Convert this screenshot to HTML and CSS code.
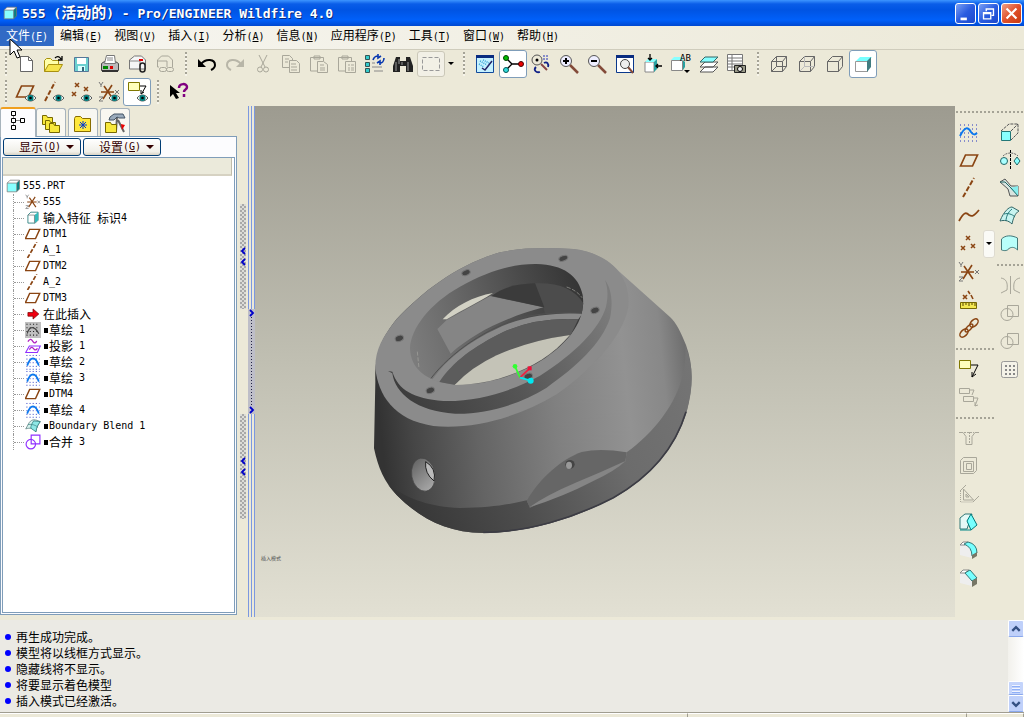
FILE: index.html
```html
<!DOCTYPE html>
<html lang="zh-CN">
<head>
    <meta charset="utf-8">
    <title>555 (活动的) - Pro/ENGINEER Wildfire 4.0</title>
    <meta name="viewport" content="width=device-width, initial-scale=1">
    <link rel="stylesheet" href="styles.css">
</head>
<body>
    <!-- shared icons -->
    <svg class="sprite" aria-hidden="true">
        <symbol id="eye" viewBox="0 0 11 8"><path d="M0 4c3-4 8-4 11 0-3 4-8 4-11 0z" fill="#e8f4f0" stroke="#555"/><circle cx="5.500" cy="4" r="3" fill="#008080"/><circle cx="5.500" cy="4" r="1.300" fill="#000"/></symbol>
        <symbol id="plane" viewBox="0 0 22 22"><path d="M2.500 17l5-11h12l-5 11z" fill="none" stroke="#8a4513" stroke-width="1.700"/></symbol>
        <symbol id="axis" viewBox="0 0 22 22"><path d="M5 20L16 1" fill="none" stroke="#8a4513" stroke-width="2" stroke-dasharray="5 2"/></symbol>
        <symbol id="points" viewBox="0 0 22 22"><path d="M8 3l4 4m0-4l-4 4M13 11l4 4m0-4l-4 4M3 13l4 4m0-4l-4 4" stroke="#8a4513" stroke-width="1.500"/></symbol>
        <symbol id="csys" viewBox="0 0 22 22"><path d="M3 11h13M6 5l9 13M14 4L5 18" stroke="#8a4513" stroke-width="1.600"/><path d="M1 1l2 3 2-3M3 4v2M17 9l4 4m0-4l-4 4M1 16h4l-4 4h4" fill="none" stroke="#777"/></symbol>
        <symbol id="sketch" viewBox="0 0 22 22"><path d="M2 2h18M2 7h18M2 12h18M2 17h18M2 21h18" stroke="#2030c0" stroke-width="1.300" stroke-dasharray="1.300 3"/><path d="M3 16c2-6 5-10 8-10s6 4 8 10" fill="none" stroke="#0a78ee" stroke-width="2.400"/></symbol>
        <symbol id="cube" viewBox="0 0 22 22"><path d="M3 7l4-4h13l-4 4z" fill="#fff"/><path d="M16 7l4-4v12l-4 4z" fill="#087f7f"/><path d="M3 7h13v12H3z" fill="#8ff"/><path d="M3 7l4-4h13v12l-4 4H3zh13v12M16 7l4-4" fill="none" stroke="#777"/></symbol>
        <symbol id="note" viewBox="0 0 22 22"><path d="M1.500 2.500h11v8h-11z" fill="#ffb" stroke="#807800"/><path d="M13 7h7l-6 12m0 0v-5m0 5l4-3" fill="none" stroke="#000"/></symbol>
        <symbol id="wire" viewBox="0 0 22 22"><path d="M3.500 8.500h11v10h-11zM3.500 8.500l5-5h10v10l-4 5M14.500 8.500l4-5" fill="none" stroke="#666"/></symbol>
        <symbol id="merge" viewBox="0 0 22 22"><circle cx="8" cy="12.500" r="6"/><path d="M8.500 3.500h11v11h-11z"/></symbol>
    </svg>

    <header class="titlebar">
        <svg class="title-icon" viewBox="0 0 22 22"><use href="#cube"/></svg>
        <h1><span class="latin">555 (</span>活动的<span class="latin">) - Pro/ENGINEER Wildfire 4.0</span></h1>
        <div class="window-buttons">
            <button aria-label="最小化"><svg viewBox="0 0 21 21"><path d="M5 15h7v3H5z" fill="#fff"/></svg></button>
            <button aria-label="还原"><svg viewBox="0 0 21 21"><path d="M5 9.500h8v7H5zM5 10.500h8M8 8V5.500h8v7h-2" fill="none" stroke="#fff" stroke-width="1.500"/></svg></button>
            <button class="close" aria-label="关闭"><svg viewBox="0 0 21 21"><path d="M5 5l11 11M16 5L5 16" stroke="#fff" stroke-width="2.400"/></svg></button>
        </div>
    </header>

    <nav class="menubar">
        <button class="active">文件<span class="latin">(<u>F</u>)</span></button>
        <button>编辑<span class="latin">(<u>E</u>)</span></button>
        <button>视图<span class="latin">(<u>V</u>)</span></button>
        <button>插入<span class="latin">(<u>I</u>)</span></button>
        <button>分析<span class="latin">(<u>A</u>)</span></button>
        <button>信息<span class="latin">(<u>N</u>)</span></button>
        <button>应用程序<span class="latin">(<u>P</u>)</span></button>
        <button>工具<span class="latin">(<u>T</u>)</span></button>
        <button>窗口<span class="latin">(<u>W</u>)</span></button>
        <button>帮助<span class="latin">(<u>H</u>)</span></button>
    </nav>
    <svg class="pointer" viewBox="0 0 13 22" aria-hidden="true"><path d="M1 1v16l4-4 3 7 3-1-3-7h5z" fill="#fff" stroke="#000"/></svg>

    <div class="toolbar">
        <span class="grip first"></span>
        <button aria-label="新建"><svg viewBox="0 0 22 22"><path d="M6.500 3.500h8l4 4v11h-12z" fill="#fff" stroke="#666"/><path d="M14.500 3.500v4h4" fill="none" stroke="#666"/></svg></button>
        <button aria-label="打开"><svg viewBox="0 0 22 22"><path d="M2.500 18.500v-11l2-2h4l2 2h6v4" fill="#ffffa8" stroke="#a89010"/><path d="M2.500 18.500l4-7h14l-4 7z" fill="#f6e44c" stroke="#a89010"/><path d="M13 5c2-2 4-2 6 1m1-3v4h-4" fill="none" stroke="#000" stroke-width="1.300"/></svg></button>
        <button aria-label="保存"><svg viewBox="0 0 22 22"><path d="M4.500 4.500h14v14h-14z" fill="#6cd0d0" stroke="#579"/><path d="M7 5h9v6H7z" fill="#fff"/><path d="M8 13h7v5H8z" fill="#dff"/><path d="M12 14h2v4h-2z" fill="#367"/></svg></button>
        <button aria-label="打印"><svg viewBox="0 0 22 22"><path d="M3.500 10.500l3-2h11l3 2v7h-17z" fill="#bbb" stroke="#444"/><path d="M6.500 10.500l2-8h8l1 8z" fill="#fff" stroke="#777"/><path d="M9 5h6M9 7h6" stroke="#888"/><path d="M5 13h5v3H5z" fill="#080"/><path d="M12 13h3v3h-3z" fill="#d00"/><path d="M4 17h16v2H4z" fill="#333"/></svg></button>
        <button aria-label="发送"><svg viewBox="0 0 22 22"><path d="M3.500 16V7l5-4h7l4 4v9z" fill="#f6f6f6" stroke="#777"/><path d="M4 8h10v8" fill="none" stroke="#888"/><path d="M13 6h4v2h-4z" fill="#d00"/><rect x="14" y="10" width="5" height="9" rx="2.500" fill="none" stroke="#222" stroke-width="1.500"/></svg></button>
        <button aria-label="发送链接" disabled><svg class="grey" viewBox="0 0 22 22"><path d="M5 14H3.500V7l4-4h7l4 4v7M4 8h9v6"/><rect x="5.500" y="14.500" width="7" height="4" rx="2"/><rect x="12.500" y="14.500" width="7" height="4" rx="2"/></svg></button>
        <span class="grip"></span>
        <button aria-label="撤消"><svg viewBox="0 0 22 22"><path d="M2 6v8h8z"/><path d="M5 11c5-6 14-5 14 1 0 3-2 4-4 5" fill="none" stroke="#000" stroke-width="2"/></svg></button>
        <button aria-label="重做" disabled><svg viewBox="0 0 22 22"><path d="M20 6v8h-8z" fill="#b8b6a8"/><path d="M17 11C12 5 3 6 3 12c0 3 2 4 4 5" fill="none" stroke="#b8b6a8" stroke-width="2"/></svg></button>
        <button aria-label="剪切" disabled><svg class="grey" viewBox="0 0 22 22"><path d="M7 2l6 12M15 2L9 14"/><circle cx="8" cy="16.500" r="2.500"/><circle cx="14" cy="16.500" r="2.500"/></svg></button>
        <button aria-label="复制" disabled><svg class="grey" viewBox="0 0 22 22"><path d="M9 14.500H2.500v-12h7l3 3v2M5 6h4M5 9h3M9.500 7.500h7l3 3v9h-10zM11 11h5M11 14h6M11 17h6"/></svg></button>
        <button aria-label="粘贴" disabled><svg class="grey" viewBox="0 0 22 22"><path d="M9 18H2.500V4.500h13V8M6 6V3h6v3zM9.500 8.500h6l4 3v8h-10zM12 12h4M12 15h5M12 17h5"/></svg></button>
        <button aria-label="选择性粘贴" disabled><svg class="grey" viewBox="0 0 22 22"><path d="M9 18H2.500V4.500h13V8M6 6V3h6v3zM9.500 8.500h10v11h-10zM12 12h2M15 12h3M12 15h2M15 15h3M12 17h2M15 17h3"/></svg></button>
        <button aria-label="再生"><svg viewBox="0 0 22 22"><path d="M1.500 2.500h4v4h-4zM1.500 9.500h4v4h-4zM1.500 15.500h4v4h-4z" fill="#3cc" stroke="#355"/><path d="M8 10h3M8 14h10M10 18h9" stroke="#888"/><path d="M9 7c1-3 3-4 5-4m0-2v4l3-2M20 5c0 3-2 5-4 5m0 2V8l-3 2" fill="none" stroke="#0838b0" stroke-width="1.600"/></svg></button>
        <button aria-label="查找"><svg viewBox="0 0 22 22"><path d="M4 4h4v4h6V4h4l3 9v6h-7v-6h-6v6H1v-6z" fill="#222"/><path d="M4 9v9M7 6v5M16 9v9M10 9v3" stroke="#999"/></svg></button>
        <button class="boxed" aria-label="选取"><svg viewBox="0 0 22 22"><path d="M2.500 4.500h17v13h-17z" fill="none" stroke="#999" stroke-dasharray="4 2"/></svg></button>
        <button class="drop" aria-label="选取选项"><svg viewBox="0 0 8 4"><path d="M1 0h6L4 3z"/></svg></button>
        <span class="grip"></span>
        <button aria-label="重画"><svg viewBox="0 0 22 22"><path d="M2.500 2.500h17v17h-17z" fill="#c5f1ff" stroke="#124a9c"/><path d="M2 2h18v3H2z" fill="#0a2c80"/><path d="M6 8l7 4M5 11l5 3M9 7l6 3" stroke="#38a4d4" stroke-width="1.500" stroke-dasharray="1 1"/><path d="M8 15l3 2 7-9" fill="none" stroke="#226" stroke-width="1.500"/></svg></button>
        <button class="pressed" aria-label="旋转中心"><svg viewBox="0 0 22 22"><path d="M4 5l6 6h9M10 11l-6 6" fill="none" stroke="#000" stroke-width="1.300"/><circle cx="4" cy="5" r="2.500" fill="#0b0" stroke="#040"/><circle cx="19" cy="11" r="2.500" fill="#e00" stroke="#400"/><circle cx="4" cy="17" r="2.500" fill="#3dd" stroke="#055"/></svg></button>
        <button aria-label="定向模式"><svg viewBox="0 0 22 22"><circle cx="7" cy="7" r="5" fill="none" stroke="#555"/><circle cx="7" cy="7" r="1.500"/><path d="M11 11l6 6" stroke="#844" stroke-width="2"/><path d="M13 3h6M13 6h6" stroke="#23b" stroke-dasharray="2 1"/><path d="M14 10c3-2 5 1 4 4M6 14c-3 3 0 6 4 5" fill="none" stroke="#128" stroke-width="1.800"/></svg></button>
        <button aria-label="放大"><svg viewBox="0 0 22 22"><path d="M12 12l8 8" stroke="#834a38" stroke-width="2.500"/><circle cx="8" cy="8" r="5.500" fill="#eef" stroke="#555"/><path d="M5 8h6M8 5v6" stroke="#000" stroke-width="2"/></svg></button>
        <button aria-label="缩小"><svg viewBox="0 0 22 22"><path d="M12 12l8 8" stroke="#834a38" stroke-width="2.500"/><circle cx="8" cy="8" r="5.500" fill="#eef" stroke="#555"/><path d="M5 8h6" stroke="#000" stroke-width="2"/></svg></button>
        <button aria-label="重新调整"><svg viewBox="0 0 22 22"><path d="M2.500 2.500h17v17h-17z" fill="#fff" stroke="#0a388c"/><path d="M2 2h18v3H2z" fill="#0a2c80"/><path d="M14 14l5 6" stroke="#834a38" stroke-width="2"/><circle cx="11" cy="11" r="4.500" fill="#eee" stroke="#444"/></svg></button>
        <button aria-label="重定向"><svg viewBox="0 0 22 22"><path d="M3 9h9v10H3z" fill="#fff" stroke="#888"/><path d="M3 9l3-3h9l-3 3z" fill="#8ff"/><path d="M12 9l3-3v10l-3 3z" fill="#29a0a0"/><path d="M8 1v6m-2-2l2 2 2-2M20 13h-6m2-2l-2 2 2 2" fill="none" stroke="#000" stroke-width="1.300"/></svg></button>
        <button aria-label="已命名视图"><svg viewBox="0 0 22 22"><path d="M1.500 7.500h11v10h-11z" fill="#fff" stroke="#888"/><path d="M1 7l3-3h8l1 3z" fill="#8ff"/><path d="M13 7l2 2v5l-2 3z" fill="#29a0a0"/><text x="10" y="8" class="tiny-label">AB</text><path d="M14 17h6l-3 3z"/></svg></button>
        <button aria-label="层"><svg viewBox="0 0 22 22"><path d="M2 19l5-5h13l-5 5zM2 14l5-5h13l-5 5z" fill="#fff" stroke="#555"/><path d="M2 9l5-5h13l-5 5z" fill="#8ff" stroke="#366"/></svg></button>
        <button aria-label="视图管理器"><svg viewBox="0 0 22 22"><path d="M1.500 1.500h15v16h-15zM6 2v15M2 5h14M2 8h14M2 11h14M2 14h14" fill="#fff" stroke="#777"/><path d="M8.500 12.500h11v7h-11z" fill="#998" stroke="#222"/><circle cx="14" cy="16" r="2.500" fill="#eee" stroke="#000"/></svg></button>
        <span class="grip"></span>
        <button aria-label="线框"><svg viewBox="0 0 22 22"><use href="#wire"/><path d="M3.500 18.500l5-5h10M8.500 3.500v10" fill="none" stroke="#666"/></svg></button>
        <button aria-label="隐藏线"><svg viewBox="0 0 22 22"><use href="#wire"/><path d="M3.500 18.500l5-5h10M8.500 3.500v10" fill="none" stroke="#bbb"/></svg></button>
        <button aria-label="消隐"><svg viewBox="0 0 22 22"><use href="#wire"/></svg></button>
        <button class="pressed" aria-label="着色"><svg viewBox="0 0 22 22"><path d="M3.500 8.500h12v10h-12z" fill="#fff" stroke="#999"/><path d="M4 8l4-4h12l-4 4z" fill="#7ff"/><path d="M15 8l4-4v10l-4 5z" fill="#407c80"/></svg></button>
    </div>

    <div class="toolbar">
        <span class="grip first"></span>
        <button aria-label="基准平面"><svg viewBox="0 0 22 22"><use href="#plane" y="-1"/><use href="#eye" x="11" y="13" width="11" height="8"/></svg></button>
        <button aria-label="基准轴"><svg viewBox="0 0 22 22"><path d="M3 20L13 1" stroke="#8a4513" stroke-width="2" stroke-dasharray="5 2"/><use href="#eye" x="11" y="13" width="11" height="8"/></svg></button>
        <button aria-label="基准点"><svg viewBox="0 0 22 22"><path d="M5 2l4 4m0-4L5 6M14 6l4 4m0-4l-4 4M2 11l4 4m0-4l-4 4" stroke="#8a4513" stroke-width="1.500"/><use href="#eye" x="11" y="13" width="11" height="8"/></svg></button>
        <button aria-label="坐标系"><svg viewBox="0 0 22 22"><use href="#csys"/><use href="#eye" x="11" y="13" width="11" height="8"/></svg></button>
        <button class="pressed" aria-label="注释"><svg viewBox="0 0 22 22"><path d="M2.500 1.500h11v8h-11z" fill="#ffb" stroke="#807800"/><path d="M14 5h6l-4 7m-1-3v4l3-2" fill="none" stroke="#000"/><use href="#eye" x="11" y="13" width="11" height="8"/></svg></button>
        <span class="grip"></span>
        <button aria-label="上下文帮助"><svg viewBox="0 0 22 22"><path d="M2 4v12l3-3 3 5 3-1-3-5h4z"/><path d="M11 7c0-5 8-5 8-1 0 3-3 2-3 5M16 13v3" fill="none" stroke="#800080" stroke-width="2.500"/></svg></button>
    </div>

    <main class="workspace">
        <aside class="navigator">
            <div class="tabs">
                <button class="current" aria-label="模型树"><svg viewBox="0 0 22 22"><path d="M4.500 1.500h4v4h-4zM4.500 8.500h4v4h-4zM4.500 15.500h4v4h-4zM13.500 8.500h4v4h-4z" fill="#fff" stroke="#000"/><path d="M6.500 6v2M6.500 13v2M9 10.500h4" stroke="#888"/></svg></button>
                <button aria-label="文件夹浏览器"><svg viewBox="0 0 22 22"><g fill="#f8e83c" stroke="#776800"><path d="M2.500 3.500h4l1 2h5v7h-10z"/><path d="M5.500 8.500h4l1 2h5v7h-10z"/><path d="M9.500 11.500h4l1 2h5v7h-10z"/></g></svg></button>
                <button aria-label="收藏夹"><svg viewBox="0 0 22 22"><path d="M2.500 19.500v-13l1-2h5l2 2h8v13z" fill="#ffe83c" stroke="#886d00"/><path d="M11 9v8M7 13h8M8 10l6 6M14 10l-6 6" stroke="#023bd0"/></svg></button>
                <button aria-label="连接"><svg viewBox="0 0 22 22"><path d="M13 5l-1 14M14 8l6 12" stroke="#666" stroke-width="2"/><path d="M1.500 10.500h5l1 2h5v8h-11z" fill="#f8e83c" stroke="#776800"/><path d="M6 5l4-3h9l2 4h-6l-2-1-3 3H5z" fill="#9ab" stroke="#456"/><path d="M17 12l4 1-3 5zM20 19l-6-9" fill="#e00"/></svg></button>
            </div>
            <div class="panel">
                <div class="panel-menu">
                    <button>显示<span class="latin">(<u>O</u>)</span><i class="arrow"></i></button>
                    <button>设置<span class="latin">(<u>G</u>)</span><i class="arrow"></i></button>
                </div>
                <div class="tree-box">
                    <div class="tree-head"></div>
                    <div class="root"><svg viewBox="0 0 22 22"><use href="#cube"/></svg><span class="latin">555.PRT</span></div>
                    <ul class="tree">
                        <li><svg viewBox="0 0 22 22"><use href="#csys"/></svg><span class="latin">555</span></li>
                        <li><svg viewBox="0 0 22 22"><path d="M4 7l4-4h10v11l-4 4H4z" fill="#fff" stroke="#066"/><path d="M13 7l5-4v11l-5 4z" fill="#3bb"/><path d="M4 7h9v11" fill="none" stroke="#777"/></svg>输入特征<span class="latin"> </span>标识<span class="latin">4</span></li>
                        <li><svg viewBox="2 2 19 19"><use href="#plane" width="22" height="22"/></svg><span class="latin">DTM1</span></li>
                        <li><svg viewBox="2 1 19 19"><use href="#axis" width="22" height="22"/></svg><span class="latin">A_1</span></li>
                        <li><svg viewBox="2 2 19 19"><use href="#plane" width="22" height="22"/></svg><span class="latin">DTM2</span></li>
                        <li><svg viewBox="2 1 19 19"><use href="#axis" width="22" height="22"/></svg><span class="latin">A_2</span></li>
                        <li><svg viewBox="2 2 19 19"><use href="#plane" width="22" height="22"/></svg><span class="latin">DTM3</span></li>
                        <li><svg viewBox="0 0 22 22"><path d="M4 9h7V4l8 7-8 7v-4H4z" fill="#f00010" stroke="#700"/></svg>在此插入</li>
                        <li class="supp"><svg class="hidden-item" viewBox="0 0 22 22"><path d="M2 3h18M2 8h18M2 13h18M2 18h18" stroke="#222" stroke-width="1.500" stroke-dasharray="1.500 3"/><path d="M3 16c3-11 10-11 16 0" fill="none" stroke="#444" stroke-width="1.500"/></svg>草绘<span class="latin"> 1</span></li>
                        <li class="supp"><svg viewBox="0 0 22 22"><path d="M4 5c3-5 5-3 7 0s4 2 5-1M6 16c3-6 5-2 7 0 2 1 3 0 4-2" fill="none" stroke="#b020c0" stroke-width="1.800"/><path d="M1 20l5-9h15l-4 9z" fill="none" stroke="#9030ff" stroke-width="1.500"/></svg>投影<span class="latin"> 1</span></li>
                        <li class="supp"><svg viewBox="0 0 22 22"><use href="#sketch"/></svg>草绘<span class="latin"> 2</span></li>
                        <li class="supp"><svg viewBox="0 0 22 22"><use href="#sketch"/></svg>草绘<span class="latin"> 3</span></li>
                        <li class="supp"><svg viewBox="2 2 19 19"><use href="#plane" width="22" height="22"/></svg><span class="latin">DTM4</span></li>
                        <li class="supp"><svg viewBox="0 0 22 22"><use href="#sketch"/></svg>草绘<span class="latin"> 4</span></li>
                        <li class="supp"><svg viewBox="0 0 22 22"><path d="M1 15l5-9c4-5 8-4 15-1-3 4-5 7-6 14-4-5-8-6-14-4z" fill="#d5f3ef" stroke="#577"/><path d="M12 4c-3 4-4 7-4 10l7 5c1-7 3-10 6-14z" fill="#8ee8e6" stroke="#277"/><path d="M4 9c6-1 11 1 14 4" fill="none" stroke="#488"/></svg><span class="latin">Boundary Blend 1</span></li>
                        <li class="supp"><svg viewBox="0 0 22 22"><g fill="none" stroke="#9030ff" stroke-width="1.600"><circle cx="8" cy="14" r="6.500"/><path d="M8.500 1.500h12v12h-12z"/></g></svg>合并<span class="latin"> 3</span></li>
                    </ul>
                </div>
            </div>
        </aside>

        <div class="sash left-sash">
            <button class="handle" aria-label="收起导航器"><svg viewBox="0 0 6 20"><path d="M5 1L2 4l3 3M5 12l-3 3 3 3" fill="none" stroke="#0000c8" stroke-width="1.800"/></svg></button>
            <button class="handle" aria-label="收起导航器"><svg viewBox="0 0 6 20"><path d="M5 1L2 4l3 3M5 12l-3 3 3 3" fill="none" stroke="#0000c8" stroke-width="1.800"/></svg></button>
        </div>
        <div class="sash browser-sash">
            <button class="handle wide" aria-label="展开浏览器">
                <svg viewBox="0 0 6 8"><path d="M1 1l3 3-3 3" fill="none" stroke="#0000c8" stroke-width="1.800"/></svg>
                <span class="dots"></span>
                <svg viewBox="0 0 6 8"><path d="M1 1l3 3-3 3" fill="none" stroke="#0000c8" stroke-width="1.800"/></svg>
            </button>
        </div>

        <section class="viewport">
            <svg class="model" viewBox="0 0 1050 930" role="img" aria-label="555.PRT">
                <defs>
                    <linearGradient id="body" x1="43" y1="400" x2="995" y2="300" gradientUnits="userSpaceOnUse">
                        <stop offset="0" stop-color="#333"/><stop offset=".1" stop-color="#464646"/><stop offset=".3" stop-color="#646464"/><stop offset=".55" stop-color="#808080"/><stop offset=".78" stop-color="#929292"/><stop offset=".9" stop-color="#888"/><stop offset="1" stop-color="#666"/>
                    </linearGradient>
                    <linearGradient id="rim" x1="80" y1="800" x2="995" y2="400" gradientUnits="userSpaceOnUse">
                        <stop offset="0" stop-color="#333"/><stop offset=".35" stop-color="#4c4c4c"/><stop offset=".7" stop-color="#6c6c6c"/><stop offset="1" stop-color="#747474"/>
                    </linearGradient>
                    <linearGradient id="step" x1="92" y1="500" x2="750" y2="200" gradientUnits="userSpaceOnUse">
                        <stop offset="0" stop-color="#3a3a3a"/><stop offset=".5" stop-color="#555"/><stop offset="1" stop-color="#7c7c7c"/>
                    </linearGradient>
                    <linearGradient id="bore" x1="150" y1="330" x2="675" y2="180" gradientUnits="userSpaceOnUse">
                        <stop offset="0" stop-color="#7c7c7c"/><stop offset=".3" stop-color="#686868"/><stop offset=".7" stop-color="#494949"/><stop offset="1" stop-color="#343434"/>
                    </linearGradient>
                    <linearGradient id="drill" x1="160" y1="680" x2="215" y2="765" gradientUnits="userSpaceOnUse">
                        <stop offset="0" stop-color="#666"/><stop offset="1" stop-color="#aaa"/>
                    </linearGradient>
                </defs>
                <path fill="url(#body)" d="M46 440L42 640C55 700 72 740 110 780C180 850 260 893 370 894C500 894 640 852 760 790C880 722 950 630 980 530C1000 450 1000 390 978 330C962 290 948 262 930 246L780 112C740 70 690 45 640 42C560 37 480 38 420 52C290 90 190 168 110 252C66 308 44 350 46 440z"/>
                <path fill="url(#rim)" d="M85 750C150 795 210 815 300 819C390 819 450 808 500 796L510 818L796 680L800 652C880 595 950 505 968 420Q980 370 975 330C1000 390 1002 450 980 530C950 630 880 722 760 790C640 852 500 894 370 894C260 893 180 850 110 780z"/>
                <path fill="none" stroke="#3c3c44" stroke-width="5" d="M370 892C500 892 640 850 760 788C880 720 948 630 978 530"/>
                <path fill="#8b8b8b" d="M46 400C55 480 100 555 220 573C340 585 480 545 590 478C700 400 780 310 802 230C818 155 780 60 640 42C560 37 480 38 420 52C290 90 190 168 110 252C66 308 45 345 46 400z"/>
                <path fill="url(#step)" d="M84 408L97 410C115 465 160 490 250 498C360 500 455 468 540 422C645 355 720 280 738 215C746 178 742 155 735 135C754 160 760 200 750 250C725 325 650 395 560 458C480 508 380 538 285 536C170 530 105 475 97 415z"/>
                <path fill="url(#bore)" d="M150 340C152 280 210 205 300 155C380 110 455 86 530 87C610 90 655 120 668 180C680 260 620 325 555 370C470 425 370 452 285 449C195 440 152 400 150 340z"/>
                <path fill="#4c4c4c" d="M525 145Q630 140 670 205L665 237H555L550 215z"/>
                <path fill="#858585" d="M232 282L260 255L390 183L550 217C430 250 340 295 272 356z"/>
                <path fill="#3b3b3b" d="M395 183C430 155 470 147 525 145L553 217z"/>
                <path fill="#d2d1c4" d="M248 253C285 212 340 185 399 174C350 205 315 220 260 253z"/>
                <path fill="#8a8a8a" d="M215 436C260 370 330 318 410 281Q510 231 668 235L655 253Q530 246 430 291C340 335 280 380 238 441z"/>
                <path fill="none" stroke="#505050" stroke-width="3" d="M213 430C270 355 380 275 500 244Q590 228 666 235"/>
                <path fill="#5c5c5c" d="M238 441C280 380 340 335 430 291Q530 246 655 253L632 300Q510 316 410 361Q335 396 285 449z"/>
                <path fill="#c4c3b7" d="M284 450Q335 396 410 361Q510 316 630 300C570 370 490 413 390 438Q330 450 284 450z"/>
                <path fill="none" stroke="#a5a59e" stroke-width="2" stroke-dasharray="12 5" d="M620 156Q650 166 666 188M172 350l5 50"/>
                <g fill="#444" stroke="#777" stroke-width="3">
                    <ellipse cx="318" cy="113" rx="13" ry="8" transform="rotate(-20 318 113)"/>
                    <ellipse cx="610" cy="70" rx="14" ry="8" transform="rotate(-20 610 70)"/>
                    <ellipse cx="705" cy="226" rx="13" ry="9" transform="rotate(-20 705 226)"/>
                    <ellipse cx="118" cy="310" rx="13" ry="9" transform="rotate(-20 118 310)"/>
                    <ellipse cx="211" cy="466" rx="13" ry="9" transform="rotate(-20 211 466)"/>
                    <ellipse cx="505" cy="424" rx="13" ry="9" transform="rotate(-20 505 424)"/>
                </g>
                <path fill="#666" d="M500 797C540 730 600 675 665 651Q720 638 800 652L796 680L510 818z"/>
                <path fill="#858585" d="M508 817Q560 780 650 742Q720 713 796 678Q770 705 700 738Q610 785 508 817z"/>
                <ellipse cx="190" cy="719" rx="35" ry="50" fill="url(#drill)" stroke="#444" stroke-width="2" transform="rotate(-10 190 719)"/>
                <path fill="#bbb" stroke="#222" stroke-width="3" d="M197 680Q193 715 222 738Q230 700 197 680z"/>
                <ellipse cx="630" cy="688" rx="14" ry="13" fill="#444"/><ellipse cx="627" cy="691" rx="9" ry="11" fill="#999"/>
                <g fill="none" stroke-width="5"><path stroke="#30ff30" d="M480 428L465 394"/><path stroke="#f02040" d="M480 428L509 400"/><path stroke="#00e8f0" d="M480 428L512 437"/></g>
                <circle cx="465" cy="394" r="7" fill="#30ff30"/><path d="M503 394h12v12h-12z" fill="#f01038"/><circle cx="512" cy="437" r="9" fill="#00e8f0"/>
            </svg>
            <p class="canvas-note">插入模式</p>
        </section>

        <aside class="features">
            <div class="feature-col">
                <span class="rule"></span>
                <button aria-label="草绘"><svg viewBox="0 0 22 22"><path d="M2 4h18M2 8h18M2 12h18M2 16h18M2 20h18" stroke="#2030c0" stroke-dasharray="1 3"/><path d="M2 15c5-10 8-9 11-4 2 3 4 3 6 1" fill="none" stroke="#0a78ee" stroke-width="2"/></svg></button>
                <button aria-label="平面"><svg viewBox="0 0 22 22"><use href="#plane"/></svg></button>
                <button aria-label="轴"><svg viewBox="0 0 22 22"><use href="#axis"/></svg></button>
                <button aria-label="曲线"><svg viewBox="0 0 22 22"><path d="M1 16c5-9 7-9 10-6 3 2 5 1 10-5" fill="none" stroke="#8a4513" stroke-width="1.800"/></svg></button>
                <div class="with-fly">
                    <button aria-label="点"><svg viewBox="0 0 22 22"><use href="#points"/></svg></button>
                    <button class="fly" aria-label="点选项"><svg viewBox="0 0 8 4"><path d="M1 0h6L4 3z"/></svg></button>
                </div>
                <button aria-label="坐标系"><svg viewBox="0 0 22 22"><use href="#csys"/></svg></button>
                <button aria-label="分析"><svg viewBox="0 0 22 22"><path d="M5 6l4 4m0-4l-4 4M10 2l2 3M13 6l2 4" stroke="#8a4513" stroke-width="1.600"/><path d="M2.500 13.500h16v6h-16z" fill="#f4e850" stroke="#776800"/><path d="M5 14v3M8 14v2M11 14v3M14 14v2M17 14v3" stroke="#554400"/></svg></button>
                <button aria-label="参照"><svg viewBox="0 0 22 22"><g fill="none" stroke="#8a4513" stroke-width="1.500"><ellipse cx="6" cy="16" rx="5" ry="3" transform="rotate(-45 6 16)"/><ellipse cx="11" cy="11" rx="5" ry="2" transform="rotate(-45 11 11)"/><ellipse cx="16" cy="6" rx="5" ry="3" transform="rotate(-45 16 6)"/></g></svg></button>
                <span class="rule"></span>
                <button aria-label="注释"><svg viewBox="0 0 22 22"><use href="#note"/></svg></button>
                <button aria-label="注释传播" disabled><svg class="grey" viewBox="0 0 22 22"><path d="M1.500 2.500h10v5h-10zM5.500 10.500h10v5h-10zM12 4h4l-2 5M16 12h4l-3 8m0-4v4l3-1"/></svg></button>
                <span class="rule"></span>
                <button aria-label="孔" disabled><svg class="grey" viewBox="0 0 22 22"><path d="M1 5.500h4l3 4v8h6v-8l3-4h4"/><path d="M6 5.500h10M11.500 5v13" stroke-dasharray="2 1"/></svg></button>
                <button aria-label="壳" disabled><svg class="grey" viewBox="0 0 22 22"><path d="M2.500 5.500l3-3h13v13l-3 3h-13zM5.500 6.500h10v10h-10zM8.500 8.500h5v6h-5z"/></svg></button>
                <button aria-label="筋" disabled><svg class="grey" viewBox="0 0 22 22"><path d="M2 8l6-6M5.500 6v11h10zM8 11v3h3zM15 19l6-6"/><path d="M2.500 8v11H15" stroke-dasharray="1 1"/></svg></button>
                <button aria-label="拔模"><svg viewBox="0 0 22 22"><path d="M2 7l5-4h7L9 18H2z" fill="#e6f8f6" stroke="#377"/><path d="M9 10l4-7 6 11-6 5z" fill="#7ff" stroke="#077"/><path d="M2 19h11" stroke="#088"/></svg></button>
                <button aria-label="倒圆角"><svg viewBox="0 0 22 22"><path d="M2 6h5q7 2 7 13L2 16z" fill="#eee"/><path d="M2 6l3-3h5l-3 3z" fill="#fff" stroke="#888"/><path d="M6 5l4-2q9 2 9 11l-5 3Q14 8 6 5z" fill="#7ff" stroke="#377"/><path d="M14 16l5-3v4l-5 3z" fill="#776"/></svg></button>
                <button aria-label="倒角"><svg viewBox="0 0 22 22"><path d="M2 6h5l7 7v6L2 16z" fill="#eee"/><path d="M2 6l3-3h6l-4 3z" fill="#fff" stroke="#888"/><path d="M7 6l5-3 7 8-5 3z" fill="#7ff" stroke="#377"/><path d="M14 14l5-3v6l-5 3z" fill="#776"/></svg></button>
            </div>
            <div class="feature-col">
                <span class="rule"></span>
                <button aria-label="拉伸"><svg viewBox="0 0 22 22"><path d="M2.500 10.500h9v9h-9z" fill="#8ff" stroke="#277"/><path d="M2 10l8-7h9v9l-7 7M12 10l7-7" fill="none" stroke="#555" stroke-dasharray="3 1"/></svg></button>
                <button aria-label="旋转"><svg viewBox="0 0 22 22"><path d="M11.500 1v20" stroke="#000" stroke-dasharray="3 1"/><circle cx="5" cy="12" r="3.500" fill="#aff" stroke="#266"/><path d="M15 12l3-4 3 4-3 4z" fill="#8ff" stroke="#266"/><path d="M4 7c4-4 11-4 15 0" fill="none" stroke="#666" stroke-dasharray="2 1"/></svg></button>
                <button aria-label="可变剖面扫描"><svg viewBox="0 0 22 22"><path d="M1 5l5-3 6 7h7v10h-8l-2-7z" fill="#d8e4df" stroke="#555"/><path d="M11 11l8-2v10z" fill="#8ee"/><path d="M1 5h5l6 6 7 8" fill="none" stroke="#266"/></svg></button>
                <button aria-label="边界混合"><svg viewBox="0 0 22 22"><path d="M1 16C5 6 10 2 13 2l7 4c-4 2-6 8-7 13-4-4-8-4-12-3z" fill="#c8f4f0" stroke="#366"/><path d="M5 9c4-1 8 0 11 3M13 4c-4 3-6 8-6 12" fill="none" stroke="#277"/></svg></button>
                <button aria-label="填充"><svg viewBox="0 0 22 22"><path d="M2.500 17V6c4-4 10-4 16-1v12c-3-3-5-3-8-2-2 3-5 3-8 2z" fill="#b8fffa" stroke="#477"/></svg></button>
                <span class="rule"></span>
                <button aria-label="镜像" disabled><svg class="grey" viewBox="0 0 22 22"><path d="M11.500 2v18M2 4c5 1 7 4 6 12l-6 3M21 4c-5 1-7 4-6 12l6 3"/></svg></button>
                <button aria-label="合并" disabled><svg class="grey" viewBox="0 0 22 22"><use href="#merge"/></svg></button>
                <button aria-label="修剪" disabled><svg class="grey" viewBox="0 0 22 22"><use href="#merge"/></svg></button>
                <button aria-label="阵列" disabled><svg viewBox="0 0 22 22"><rect x="2.500" y="3.500" width="16" height="16" rx="2" fill="#f4f2e8" stroke="#999"/><path d="M6 8h11M6 12h11M6 16h11" stroke="#888" stroke-width="2" stroke-dasharray="2 2"/></svg></button>
            </div>
        </aside>
    </main>

    <section class="messages">
        <ul>
            <li>再生成功完成。</li>
            <li>模型将以线框方式显示。</li>
            <li>隐藏线将不显示。</li>
            <li>将要显示着色模型</li>
            <li>插入模式已经激活。</li>
        </ul>
        <div class="scrollbar">
            <button aria-label="向上滚动"><svg viewBox="0 0 15 15"><path d="M3.500 9.500l4-4 4 4" fill="none" stroke="#345083" stroke-width="2.500"/></svg></button>
            <span class="track"></span>
            <button class="thumb" aria-label="滚动块"></button>
            <button aria-label="向下滚动"><svg viewBox="0 0 15 15"><path d="M3.500 5.500l4 4 4-4" fill="none" stroke="#345083" stroke-width="2.500"/></svg></button>
        </div>
    </section>
    <footer class="statusbar"><span></span><span></span><span></span></footer>
</body>
</html>
```

FILE: styles.css
```css
* {
    box-sizing: border-box;
}
body {
    margin: 0;
    height: 100vh;
    display: flex;
    flex-direction: column;
    overflow: hidden;
    background: #ece9d8;
    color: #000;
    font: 12px/16px "Noto Sans CJK SC", sans-serif;
    position: relative;
}
button {
    margin: 0;
    padding: 0;
    border: 0;
    background: none;
    font: inherit;
    color: inherit;
}
svg {
    display: block;
    flex: none;
}
.sprite {
    position: absolute;
    width: 0;
    height: 0;
}
.latin {
    font-family: "DejaVu Sans Mono", "Noto Sans CJK SC", monospace;
    font-size: 10px;
    white-space: pre;
}
.grey {
    fill: none;
    stroke: #a9a79a;
}
.tiny-label {
    font: 9px "DejaVu Sans Mono", monospace;
}

/* title bar */
.titlebar {
    height: 26px;
    flex: none;
    display: flex;
    align-items: center;
    padding: 0 2px 0 2px;
    background: linear-gradient(#3d95ff 0, #0a5de8 4px, #0054e3 10px, #0060fa 20px, #0048d0 26px);
}
.title-icon {
    width: 16px;
    height: 16px;
    margin-right: 4px;
}
.titlebar h1 {
    flex: 1;
    margin: 0;
    color: #fff;
    font-size: 15px;
    line-height: 24px;
    font-weight: bold;
    text-shadow: 1px 1px 0 #0a2c80;
    white-space: nowrap;
}
.titlebar .latin {
    font-size: 13px;
}
.window-buttons {
    display: flex;
    gap: 2px;
}
.window-buttons button {
    width: 21px;
    height: 21px;
    border: 1px solid #fff;
    border-radius: 3px;
    background: linear-gradient(135deg, #7ba0f4, #2a5ce0 50%, #1c48cc);
}
.window-buttons svg {
    width: 19px;
    height: 19px;
}
.window-buttons .close {
    background: linear-gradient(135deg, #f0a088, #e0512c 50%, #c83a10);
}

/* menu bar */
.menubar {
    height: 24px;
    flex: none;
    display: flex;
    align-items: flex-start;
    background: linear-gradient(90deg, #f7f6f1, #ece9d8);
    border-bottom: 1px solid #cfccbc;
}
.menubar button {
    height: 20px;
    padding: 0 6px 2px;
    line-height: 18px;
    white-space: nowrap;
}
.menubar .active {
    background: #316ac5;
    color: #fff;
}
.pointer {
    position: absolute;
    left: 9px;
    top: 38px;
    width: 13px;
    height: 22px;
    z-index: 2;
}

/* toolbars */
.toolbar {
    height: 28px;
    flex: none;
    display: flex;
    align-items: center;
}
.toolbar button,
.feature-col button {
    width: 28px;
    height: 28px;
    flex: none;
    display: flex;
    align-items: center;
    justify-content: center;
    border-radius: 3px;
}
.toolbar svg,
.feature-col svg {
    width: 22px;
    height: 22px;
}
.toolbar .drop {
    width: 12px;
}
.toolbar .drop svg,
.feature-col .fly svg {
    width: 8px;
    height: 4px;
}
.toolbar .pressed {
    background: #fff;
    border: 1px solid #7f9db9;
}
.toolbar .boxed {
    height: 26px;
    background: #f2f0e6;
    border: 1px solid #cbc8b8;
}
.grip {
    width: 14px;
    height: 24px;
    flex: none;
    background: repeating-linear-gradient(#a5a396 0 2px, #f6f4ea 2px 4px) center / 2px 100% no-repeat;
}
.grip.first {
    width: 11px;
}

/* workspace */
.workspace {
    flex: 1;
    min-height: 0;
    display: flex;
}
.navigator {
    width: 237px;
    flex: none;
    display: flex;
    flex-direction: column;
    padding: 1px 0 2px;
}
.tabs {
    height: 29px;
    flex: none;
    display: flex;
    align-items: flex-end;
    gap: 2px;
}
.tabs button {
    width: 30px;
    height: 28px;
    display: flex;
    align-items: center;
    justify-content: center;
    border: 1px solid #a7b3bc;
    border-bottom: 0;
    border-radius: 3px 3px 0 0;
    background: #f8f7f1;
}
.tabs .current {
    width: 36px;
    height: 30px;
    margin-bottom: -1px;
    margin-right: -2px;
    padding-bottom: 4px;
    border-top: 2px solid #f0a020;
    background: #fcfcfe;
    z-index: 1;
}
.tabs svg {
    width: 22px;
    height: 22px;
}
.panel {
    flex: 1;
    min-height: 0;
    display: flex;
    flex-direction: column;
    padding: 1px;
    border: 1px solid #7f9db9;
    background: #fcfcfe;
}
.panel-menu {
    display: flex;
    gap: 2px;
    padding: 0 1px 1px;
}
.panel-menu button {
    width: 78px;
    height: 18px;
    display: flex;
    align-items: center;
    justify-content: flex-end;
    padding-right: 6px;
    border: 1px solid #003c74;
    border-radius: 3px;
    background: linear-gradient(#fff, #f0efe8 80%, #d8d2c4);
    color: #300;
}
.arrow {
    margin-left: 5px;
    border: 4px solid transparent;
    border-top-color: #300;
    border-bottom: 0;
}
.tree-box {
    flex: 1;
    min-height: 0;
    border: 1px solid #7f9db9;
    background: #fff;
}
.tree-head {
    height: 18px;
    margin-right: 2px;
    border-right: 1px solid #c0bcab;
    border-bottom: 2px solid #d6d2c2;
    background: #ebeadb;
}
.root {
    display: flex;
    align-items: center;
    gap: 2px;
    height: 16px;
    margin-top: 2px;
    padding-left: 2px;
}
.root svg,
.tree svg {
    width: 16px;
    height: 16px;
}
.tree {
    margin: 0 0 0 10px;
    padding: 0;
    list-style: none;
}
.tree li {
    display: flex;
    align-items: center;
    height: 16px;
    white-space: nowrap;
    border-left: 1px dotted #999;
}
.tree li:before {
    content: "";
    width: 10px;
    margin-right: 1px;
    border-top: 1px dotted #999;
}
.tree li svg {
    margin-right: 2px;
}
/* square mark in front of the name */
.tree .supp svg {
    box-sizing: content-box;
    margin-right: 0;
    padding-right: 8px;
    background: linear-gradient(#000, #000) 19px 6px / 4px 5px no-repeat;
}
.tree .hidden-item {
    background: linear-gradient(#000, #000) 19px 6px / 4px 5px no-repeat, linear-gradient(#c0c0c0, #c0c0c0) 0 0 / 16px 16px no-repeat;
}
.tree .supp .hidden-item {
    background: linear-gradient(#000, #000) 19px 6px / 4px 5px no-repeat, linear-gradient(#c0c0c0, #c0c0c0) 0 0 / 16px 16px no-repeat;
}

/* sashes between the panes */
.sash {
    flex: none;
    display: flex;
    flex-direction: column;
    justify-content: center;
}
.left-sash {
    width: 11px;
    align-items: center;
    gap: 105px;
}
.handle {
    width: 6px;
    height: 105px;
    display: flex;
    align-items: center;
    justify-content: center;
    background: repeating-conic-gradient(#a8a8a8 0 25%, #dcdcd8 0 50%) 0 0 / 4px 4px;
}
.handle svg {
    width: 6px;
    height: 20px;
}
.browser-sash {
    width: 7px;
    background: linear-gradient(90deg, #7c98e0 1px, #ece9d8 1px 3px, #7c98e0 3px 4px, #ece9d8 4px 6px, #7c98e0 6px);
}
.handle.wide {
    width: 7px;
    flex-direction: column;
    justify-content: space-between;
    background: #bebec8;
}
.wide svg {
    height: 8px;
}
.dots {
    flex: 1;
    width: 1px;
    background: repeating-linear-gradient(#224 0 1px, transparent 1px 3px);
}

.viewport {
    flex: 1;
    min-width: 0;
    position: relative;
    overflow: hidden;
    background: linear-gradient(#9d9b90, #c0bfb2 50%, #e2e0d3);
}
.model {
    position: absolute;
    left: 15%;
    top: 129px;
    width: 50%;
}
.canvas-note {
    position: absolute;
    left: 6px;
    bottom: 55px;
    margin: 0;
    font-size: 5px;
    line-height: 8px;
    color: #555;
}

/* feature toolbars */
.features {
    width: 69px;
    flex: none;
    display: flex;
}
.feature-col:first-child {
    width: 41px;
}
.rule {
    display: block;
    height: 13px;
    margin: 0 1px;
    background: repeating-linear-gradient(90deg, #a5a396 0 2px, transparent 2px 4px) 0 center / 100% 2px no-repeat;
}
.rule:first-child {
    height: 12px;
}
.with-fly {
    display: flex;
}
.feature-col .fly {
    width: 12px;
    background: #fafaf6;
    border: 1px solid #dedbd0;
}

/* message log */
.messages {
    height: 95px;
    flex: none;
    display: flex;
    border-top: 3px solid #ece9d8;
    background: #ebeae4;
}
.messages ul {
    flex: 1;
    margin: 0;
    padding: 9px 0 0 5px;
    list-style: none;
}
.messages li {
    display: flex;
    align-items: center;
    height: 16px;
}
.messages li:before {
    content: "";
    width: 6px;
    height: 6px;
    margin-right: 5px;
    border-radius: 50%;
    background: #00f;
}
.scrollbar {
    width: 16px;
    display: flex;
    flex-direction: column;
    background: linear-gradient(90deg, #f2f1ec, #fff);
}
.scrollbar button {
    height: 17px;
    border: 1px solid #fff;
    border-bottom-color: #8aa8ec;
    border-radius: 2px;
    background: #bfd0fa;
}
.scrollbar svg {
    width: 14px;
    height: 14px;
}
.track {
    flex: 1;
}
.scrollbar .thumb {
    height: 14px;
    background: repeating-linear-gradient(#bfd0fa 0 1px, #f0f4ff 1px 2px, #8fb0f8 2px 3px) center / 8px 9px no-repeat #c4d4fb;
}

.statusbar {
    height: 5px;
    flex: none;
    display: flex;
    border-top: 1px solid #a09d90;
    background: #ece9d8;
}
.statusbar span {
    width: 57px;
    border-top: 1px solid #fff;
    border-right: 1px solid #a09d90;
}
.statusbar span:first-child {
    flex: 688;
}
.statusbar span:nth-child(2) {
    flex: 279;
}
```
